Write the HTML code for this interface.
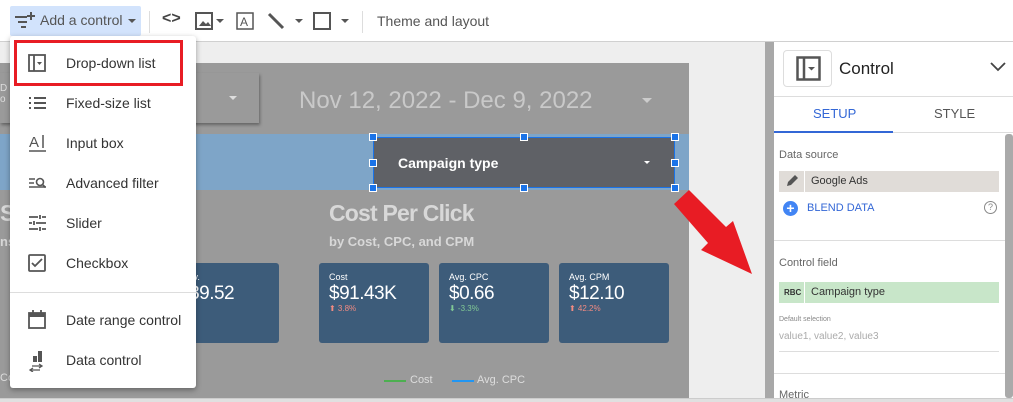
<!DOCTYPE html>
<html><head><meta charset="utf-8"><style>
*{margin:0;padding:0;box-sizing:border-box}
body{width:1013px;height:402px;overflow:hidden;position:relative;background:#eeeeee;font-family:"Liberation Sans",Arial,sans-serif;}
.a{position:absolute}
.tb{left:0;top:0;width:1013px;height:42px;background:#fff;border-bottom:1px solid #d0d0d0}
.mi{position:absolute;left:66px;font-size:14px;color:#333}
.ic{position:absolute;left:28px}
.card{position:absolute;top:263px;width:110px;height:80px;background:#3d5c7a;border-radius:3px;color:#fff}
.card .l{position:absolute;left:10px;top:9px;font-size:9px}
.card .v{position:absolute;left:10px;top:20px;font-size:19px;letter-spacing:-0.5px}
.card .d{position:absolute;left:10px;top:41px;font-size:8px}
.pl{font-size:11px;color:#666;position:absolute;left:779px}
.h{position:absolute;width:8px;height:8px;background:#1a73e8;border:1px solid #fff}
</style></head><body>
<div class="a tb"></div>
<div class="a" style="left:10px;top:6px;width:131px;height:30px;background:#d2e3fc;border-radius:2px"></div>
<svg class="a" style="left:14px;top:11px" width="22" height="18" viewBox="0 0 22 18"><path d="M1 6h12M4 11h9M7 16h5" stroke="#555" stroke-width="2"/><path d="M17 1v8M13 5h8" stroke="#555" stroke-width="2"/></svg>
<div class="a" style="left:40px;top:12px;font-size:14px;color:#555">Add a control</div>
<div class="a" style="left:128px;top:19px;border:4px solid transparent;border-top:4px solid #555"></div>
<div class="a" style="left:149px;top:11px;width:1px;height:22px;background:#ddd"></div>
<div class="a" style="left:162px;top:10px;font-size:16px;color:#444;font-weight:bold">&lt;&gt;</div>
<svg class="a" style="left:195px;top:12px" width="40" height="20"><rect x="1" y="1" width="16" height="16" fill="none" stroke="#555" stroke-width="2"/><path d="M4 14l4-5 3 3 2-2 3 4z" fill="#555"/><path d="M21 7h8l-4 4z" fill="#555"/></svg>
<svg class="a" style="left:236px;top:12px" width="18" height="18"><rect x="1" y="1" width="16" height="16" fill="none" stroke="#555" stroke-width="1.5"/><text x="4" y="14" font-size="12" fill="#555" font-family="Liberation Sans">A</text></svg>
<svg class="a" style="left:267px;top:12px" width="40" height="20"><path d="M2 2l14 14" stroke="#555" stroke-width="3"/><path d="M28 7h8l-4 4z" fill="#555"/></svg>
<svg class="a" style="left:313px;top:12px" width="40" height="20"><rect x="1" y="1" width="16" height="16" fill="none" stroke="#555" stroke-width="2"/><path d="M28 7h8l-4 4z" fill="#555"/></svg>
<div class="a" style="left:362px;top:11px;width:1px;height:22px;background:#ddd"></div>
<div class="a" style="left:377px;top:13px;font-size:14px;color:#555">Theme and layout</div>

<!-- report -->
<div class="a" style="left:0;top:63px;width:689px;height:336px;background:#9a9a9a"></div>
<div class="a" style="left:0;top:73px;width:259px;height:50px;background:#9a9a9a;box-shadow:1px 2px 3px rgba(0,0,0,.35)"></div>
<div class="a" style="left:0;top:83px;font-size:10px;color:#ddd">D<br>o</div>
<div class="a" style="left:229px;top:96px;border:4px solid transparent;border-top:4px solid #ddd"></div>
<div class="a" style="left:299px;top:87px;font-size:24px;color:#c9c9c9">Nov 12, 2022 - Dec 9, 2022</div>
<div class="a" style="left:642px;top:98px;border:5px solid transparent;border-top:5px solid #ccc"></div>
<div class="a" style="left:0;top:134px;width:689px;height:56px;background:#7ea5c8"></div>
<div class="a" style="left:373px;top:137px;width:302px;height:51px;background:#5f6166;border:1px solid #1a73e8"></div>
<div class="a" style="left:398px;top:155px;font-size:14px;color:#fff;font-weight:bold">Campaign type</div>
<div class="a" style="left:644px;top:161px;border:3px solid transparent;border-top:3px solid #fff"></div>
<div class="h" style="left:369px;top:133px"></div><div class="h" style="left:520px;top:133px"></div><div class="h" style="left:671px;top:133px"></div>
<div class="h" style="left:369px;top:159px"></div><div class="h" style="left:671px;top:159px"></div>
<div class="h" style="left:369px;top:184px"></div><div class="h" style="left:520px;top:184px"></div><div class="h" style="left:671px;top:184px"></div>
<div class="a" style="left:0;top:200px;font-size:23px;color:#d8d8d8;font-weight:bold">Si</div>
<div class="a" style="left:0;top:234px;font-size:13px;color:#d8d8d8;font-weight:bold">ns</div>
<div class="a" style="left:329px;top:200px;font-size:23px;color:#d8d8d8;font-weight:bold;letter-spacing:-0.8px">Cost Per Click</div>
<div class="a" style="left:329px;top:234px;font-size:13px;color:#d8d8d8;font-weight:bold">by Cost, CPC, and CPM</div>
<div class="card" style="left:50px"></div>
<div class="card" style="left:169px"><div class="l">conv.</div><div class="v">$39.52</div></div>
<div class="card" style="left:319px"><div class="l">Cost</div><div class="v">$91.43K</div><div class="d" style="color:#f28b82">⬆ 3.8%</div></div>
<div class="card" style="left:439px"><div class="l">Avg. CPC</div><div class="v">$0.66</div><div class="d" style="color:#81c995">⬇ -3.3%</div></div>
<div class="card" style="left:559px"><div class="l">Avg. CPM</div><div class="v">$12.10</div><div class="d" style="color:#f28b82">⬆ 42.2%</div></div>
<div class="a" style="left:0;top:372px;font-size:11px;color:#ddd">Co</div>
<div class="a" style="left:384px;top:380px;width:22px;height:2px;background:#4caf50"></div>
<div class="a" style="left:410px;top:374px;font-size:11px;color:#ddd">Cost</div>
<div class="a" style="left:452px;top:380px;width:22px;height:2px;background:#2196f3"></div>
<div class="a" style="left:477px;top:374px;font-size:11px;color:#ddd">Avg. CPC</div>

<!-- menu -->
<div class="a" style="left:10px;top:36px;width:186px;height:352px;background:#fff;border-radius:3px;box-shadow:0 2px 6px rgba(0,0,0,.35)"></div>
<div class="a" style="left:14px;top:40px;width:169px;height:46px;border:3px solid #e81c24"></div>
<svg class="ic" style="top:54px" width="20" height="20"><rect x="1" y="1" width="16" height="16" fill="none" stroke="#555" stroke-width="1.8"/><path d="M6 1v16" stroke="#555" stroke-width="1.8"/><path d="M9 8h5l-2.5 3z" fill="#555"/></svg>
<div class="mi" style="top:55px">Drop-down list</div>
<svg class="ic" style="top:95px" width="20" height="16"><path d="M1 3h2M6 3h12M1 8h2M6 8h12M1 13h2M6 13h12" stroke="#555" stroke-width="2"/></svg>
<div class="mi" style="top:95px">Fixed-size list</div>
<svg class="ic" style="top:133px" width="20" height="20"><text x="1" y="14" font-size="15" fill="#555" font-family="Liberation Sans">A</text><path d="M15 2v13M1 18h17" stroke="#555" stroke-width="1.5"/></svg>
<div class="mi" style="top:135px">Input box</div>
<svg class="ic" style="top:175px" width="20" height="16"><path d="M1 4h6M1 8h5M1 12h17" stroke="#555" stroke-width="1.6"/><circle cx="12" cy="7" r="3.5" fill="none" stroke="#555" stroke-width="1.6"/><path d="M14.5 9.5l3 3" stroke="#555" stroke-width="1.6"/></svg>
<div class="mi" style="top:175px">Advanced filter</div>
<svg class="ic" style="top:214px" width="20" height="18"><path d="M1 3h9M14 3h4M12 1v4M1 9h3M8 9h10M6 7v4M1 15h9M14 15h4M12 13v4" stroke="#555" stroke-width="1.8"/></svg>
<div class="mi" style="top:215px">Slider</div>
<svg class="ic" style="top:254px" width="20" height="20"><rect x="1" y="1" width="16" height="16" fill="none" stroke="#555" stroke-width="1.8" rx="1"/><path d="M4 9l3 3 7-7" fill="none" stroke="#555" stroke-width="1.8"/></svg>
<div class="mi" style="top:255px">Checkbox</div>
<div class="a" style="left:10px;top:292px;width:186px;height:1px;background:#ddd"></div>
<svg class="ic" style="top:310px" width="20" height="20"><rect x="1" y="3" width="16" height="15" fill="none" stroke="#555" stroke-width="1.8"/><rect x="1" y="3" width="16" height="4" fill="#555"/><path d="M5 0v4M13 0v4" stroke="#555" stroke-width="1.8"/></svg>
<div class="mi" style="top:312px">Date range control</div>
<svg class="ic" style="top:350px" width="20" height="22"><rect x="10" y="1" width="4" height="11" fill="#555"/><rect x="5" y="6" width="4" height="6" fill="#555"/><path d="M4 16h10M11 14l3 2-3 2M2 20h10M5 18l-3 2 3 2" fill="none" stroke="#555" stroke-width="1.3"/></svg>
<div class="mi" style="top:352px">Data control</div>

<!-- arrow -->
<svg class="a" style="left:0;top:0" width="1013" height="402"><polygon points="689,190 726,227 733,221 752,274 701,250 708,243 674,204" fill="#e81c24"/></svg>

<!-- divider & panel -->
<div class="a" style="left:765px;top:42px;width:9px;height:357px;background:#a8a8a8"></div>
<div class="a" style="left:774px;top:42px;width:239px;height:357px;background:#fff"></div>
<div class="a" style="left:0;top:398px;width:1013px;height:4px;background:#e0e0e0;border-top:1px solid #ccc"></div>
<div class="a" style="left:783px;top:50px;width:49px;height:37px;border:1px solid #ddd;border-radius:4px"></div>
<svg class="a" style="left:796px;top:56px" width="26" height="26"><rect x="1.5" y="1.5" width="22" height="22" fill="none" stroke="#555" stroke-width="2.5"/><path d="M8 1.5v22" stroke="#555" stroke-width="2.5"/><path d="M12 11h7l-3.5 3.5z" fill="#555"/></svg>
<div class="a" style="left:839px;top:59px;font-size:17px;color:#222">Control</div>
<svg class="a" style="left:990px;top:62px" width="16" height="10"><path d="M1 1l7 7 7-7" fill="none" stroke="#444" stroke-width="1.8"/></svg>
<div class="a" style="left:774px;top:96px;width:239px;height:1px;background:#ddd"></div>
<div class="a" style="left:813px;top:106px;font-size:13px;color:#3367d6">SETUP</div>
<div class="a" style="left:934px;top:106px;font-size:13px;color:#555">STYLE</div>
<div class="a" style="left:774px;top:132px;width:239px;height:1px;background:#ddd"></div>
<div class="a" style="left:774px;top:131px;width:119px;height:2px;background:#3367d6"></div>
<div class="a" style="left:1005px;top:134px;width:8px;height:264px;background:#aaa;border-radius:3px"></div>
<div class="pl" style="top:149px">Data source</div>
<div class="a" style="left:779px;top:171px;width:220px;height:21px;background:#e0dcd8"></div>
<div class="a" style="left:804px;top:171px;width:1px;height:21px;background:#fff"></div>
<svg class="a" style="left:785px;top:174px" width="14" height="14"><path d="M2 12l1-4 7-7 3 3-7 7z" fill="#555"/></svg>
<div class="a" style="left:811px;top:175px;font-size:11px;color:#333">Google Ads</div>
<div class="a" style="left:783px;top:201px;width:15px;height:15px;border-radius:50%;background:#4285f4;color:#fff;font-size:14px;line-height:15px;text-align:center;font-weight:bold">+</div>
<div class="a" style="left:807px;top:202px;font-size:11px;color:#3367d6">BLEND DATA</div>
<div class="a" style="left:984px;top:201px;width:13px;height:13px;border-radius:50%;border:1px solid #888;font-size:9px;color:#888;text-align:center;line-height:11px">?</div>
<div class="a" style="left:774px;top:240px;width:231px;height:1px;background:#ddd"></div>
<div class="pl" style="top:257px">Control field</div>
<div class="a" style="left:779px;top:282px;width:220px;height:21px;background:#c8e6c9"></div>
<div class="a" style="left:804px;top:282px;width:1px;height:21px;background:#fff"></div>
<div class="a" style="left:784px;top:288px;font-size:8px;color:#333;font-weight:bold">RBC</div>
<div class="a" style="left:811px;top:286px;font-size:11px;color:#333">Campaign type</div>
<div class="a" style="left:779px;top:316px;font-size:7px;color:#888">Default selection</div>
<div class="a" style="left:779px;top:331px;font-size:10px;color:#aaa">value1, value2, value3</div>
<div class="a" style="left:779px;top:351px;width:220px;height:1px;background:#ddd"></div>
<div class="a" style="left:774px;top:373px;width:231px;height:1px;background:#ddd"></div>
<div class="pl" style="top:389px">Metric</div>
</body></html>
